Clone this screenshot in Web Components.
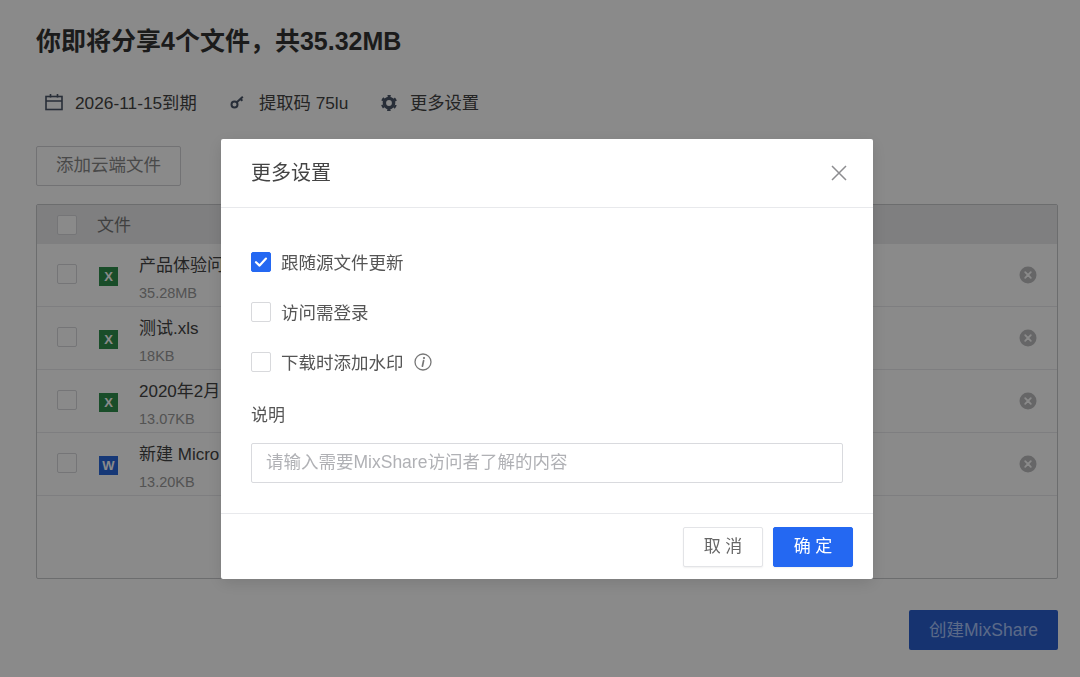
<!DOCTYPE html>
<html lang="zh"><head><meta charset="utf-8">
<style>
html,body{margin:0;padding:0;height:100%;background:#fff}
body{font-family:"Liberation Sans","Noto Sans CJK SC",sans-serif;overflow:hidden}
</style></head><body>
<share-page>
  <file-row name="产品体验问" size="35.28MB" kind="X"></file-row>
  <file-row name="测试.xls" size="18KB" kind="X"></file-row>
  <file-row name="2020年2月" size="13.07KB" kind="X"></file-row>
  <file-row name="新建 Micro" size="13.20KB" kind="W"></file-row>
</share-page>
<settings-dialog></settings-dialog>
<script>
const BASE=':host{font-family:"Liberation Sans","Noto Sans CJK SC",sans-serif}*{box-sizing:border-box}';
function def(name,html){
  customElements.define(name,class extends HTMLElement{
    constructor(){super();this.attachShadow({mode:'open'});if(typeof html!=='function')this.shadowRoot.innerHTML=html;}
    connectedCallback(){
      if(typeof html==='function'){this.shadowRoot.innerHTML=html(this);}
    }
  });
}
def('check-box',el=>`<style>${BASE}:host{display:block;width:20px;height:20px;flex:none}
div{width:20px;height:20px;border-radius:2px;border:1px solid ${el.hasAttribute('on')?'#2468f2':'#d8d9dc'};background:${el.hasAttribute('on')?'#2468f2':'#fff'};display:flex;align-items:center;justify-content:center}</style>
<div>${el.hasAttribute('on')?'<svg width="14" height="12" viewBox="0 0 14 12"><path d="M2 6.2 5.6 9.6 12 2.6" fill="none" stroke="#fff" stroke-width="2.2" stroke-linecap="round" stroke-linejoin="round"/></svg>':''}</div>`);

def('file-row',el=>{const k=el.getAttribute('kind');const c=k==='X'?'#2f8f4c':'#2a68dc';return `<style>${BASE}
:host{display:flex;height:62px;border-bottom:1px solid #e9e9ec;align-items:flex-start;position:relative}
check-box{margin:20px 0 0 20px}
.ic{width:19px;height:19px;background:${c};color:#fff;font:700 13px/19px "Liberation Sans",sans-serif;text-align:center;margin:23px 0 0 22px;flex:none}
.t{margin-left:21px;flex:1}
.n{font-size:17px;line-height:24px;margin-top:10px;color:#444;white-space:nowrap}
.s{font-size:14.5px;line-height:18px;margin-top:6px;color:#999}
svg{margin:22px 20px 0 0;flex:none}
</style><check-box></check-box><div class="ic">${k}</div><div class="t"><div class="n">${el.getAttribute('name')}</div><div class="s">${el.getAttribute('size')}</div></div>
<svg width="18" height="18" viewBox="0 0 18 18"><circle cx="9" cy="9" r="8.5" fill="#bdbdbf"/><path d="M6.2 6.2 11.8 11.8M11.8 6.2 6.2 11.8" stroke="#fff" stroke-width="1.8" stroke-linecap="round"/></svg>`});

def('meta-item',el=>`<style>${BASE}:host{display:flex;align-items:center;font-size:17.3px;color:#444;white-space:nowrap}
::slotted(svg){flex:none}</style><slot name="i"></slot><span style="margin-left:${el.getAttribute('gap')||12}px"><slot></slot></span>`);

def('share-page',`<style>${BASE}
:host{display:block;height:677px;padding:26px 22px 0 36px;color:#333}
h1{margin:0;font-size:25px;line-height:30px;font-weight:700;color:#333}
.meta{display:flex;margin:33px 0 0 9px;height:24px;align-items:center}
.b{display:block;width:145px;height:40px;margin-top:33px;border:1px solid #d2d3d6;border-radius:2px;background:#fff;font:17.5px/36px "Liberation Sans","Noto Sans CJK SC",sans-serif;color:#888;text-align:center}
.tb{margin-top:18px;height:375px;border:1px solid #c8c9cc;border-radius:2px;overflow:hidden}
.h{height:39px;background:#eaeaec;display:flex;align-items:center;padding-left:20px;font-size:17px;color:#777}
.h span{margin:-3px 0 0 20px}
.ft{display:flex;justify-content:flex-end;margin-top:31px}
.go{width:149px;height:40px;border-radius:2px;background:#2a5fd0;color:#a9c4fb;font-size:17.5px;line-height:40px;text-align:center}
</style>
<h1>你即将分享4个文件，共35.32MB</h1>
<div class="meta">
<meta-item style="width:185px"><svg slot="i" style="margin-top:2px" width="18" height="17" viewBox="0 0 18 17" fill="none" stroke="#4a5568" stroke-width="1.6"><rect x="1" y="2.5" width="16" height="13"/><path d="M1 7H17M5.5 0V3.5M12.5 0V3.5"/></svg>2026-11-15到期</meta-item>
<meta-item gap="15" style="width:151px"><svg slot="i" style="margin-top:2px" width="14" height="14" viewBox="0 0 14 14" fill="none" stroke="#4a5568" stroke-width="2"><circle cx="4.5" cy="9.5" r="3"/><path d="M6.8 7.2 12.8 1.8M10.4 4 12.4 5.8"/></svg>提取码 75lu</meta-item>
<meta-item gap="13"><svg slot="i" style="margin-top:3px" width="16" height="16" viewBox="0 0 16 16" fill="none" stroke="#4a5568"><circle cx="8" cy="8" r="4.6" stroke-width="3.4"/><circle cx="8" cy="8" r="7" stroke-width="2.2" stroke-dasharray="3.33 4" stroke-dashoffset="1.67" transform="rotate(-90 8 8)"/></svg>更多设置</meta-item>
</div>
<div class="b">添加云端文件</div>
<div class="tb"><div class="h"><check-box></check-box><span>文件</span></div><slot></slot></div>
<div class="ft"><div class="go">创建MixShare</div></div>`);

def('settings-dialog',`<style>${BASE}
:host{position:fixed;inset:0;background:rgba(0,0,0,.46);display:block;padding:139px 0 0 221px}
.d{width:652px;height:440px;background:#fff;border-radius:2px;display:flex;flex-direction:column;box-shadow:0 4px 16px rgba(0,0,0,.12);color:#444}
.hd{height:69px;flex:none;border-bottom:1px solid #e8e9ec;display:flex;align-items:center;justify-content:space-between;padding:0 26px 0 30px;font-size:20px;color:#444}
.hd span{margin-top:-4px}
.bd{flex:1;padding:44px 30px 0}
.o{display:flex;align-items:center;height:20px;margin-bottom:30px;font-size:17.5px;color:#555;white-space:nowrap}
.o span{margin-left:10px;margin-top:-2px}
.o svg{margin-left:10px}
.l{font-size:17px;line-height:24px;margin-top:32px;color:#555}
.i{height:40px;margin-top:15px;border:1px solid #d9dade;border-radius:2px;padding-left:14px;font-size:17.5px;line-height:36px;color:#b0b1b5}
.ftr{height:66px;flex:none;border-top:1px solid #e8e9ec;display:flex;justify-content:flex-end;gap:10px;padding:13px 20px 0 0}
.btn{width:80px;height:40px;border-radius:2px;font-size:17px;line-height:38px;text-align:center;border:1px solid #e3e4e7;color:#666;background:#fff;box-shadow:0 1px 2px rgba(0,0,0,.06)}
.btn.p{background:#2468f2;border-color:#2468f2;color:#fff}
</style>
<div class="d">
<div class="hd"><span>更多设置</span><svg width="16" height="16" viewBox="0 0 16 16"><path d="M1 1 15 15M15 1 1 15" stroke="#8d8d90" stroke-width="1.5"/></svg></div>
<div class="bd">
<div class="o"><check-box on></check-box><span>跟随源文件更新</span></div>
<div class="o"><check-box></check-box><span>访问需登录</span></div>
<div class="o" style="margin-bottom:0"><check-box></check-box><span>下载时添加水印</span><svg width="18" height="18" viewBox="0 0 18 18" fill="none" stroke="#777"><circle cx="9" cy="9" r="8" stroke-width="1.3"/><path d="M9.6 7.6 8.4 13.2" stroke-width="1.7" stroke-linecap="round"/><circle cx="10" cy="5" r=".7" fill="#777" stroke-width="1"/></svg></div>
<div class="l">说明</div>
<div class="i">请输入需要MixShare访问者了解的内容</div>
</div>
<div class="ftr"><div class="btn">取 消</div><div class="btn p">确 定</div></div>
</div>`);
</script>
</body></html>
